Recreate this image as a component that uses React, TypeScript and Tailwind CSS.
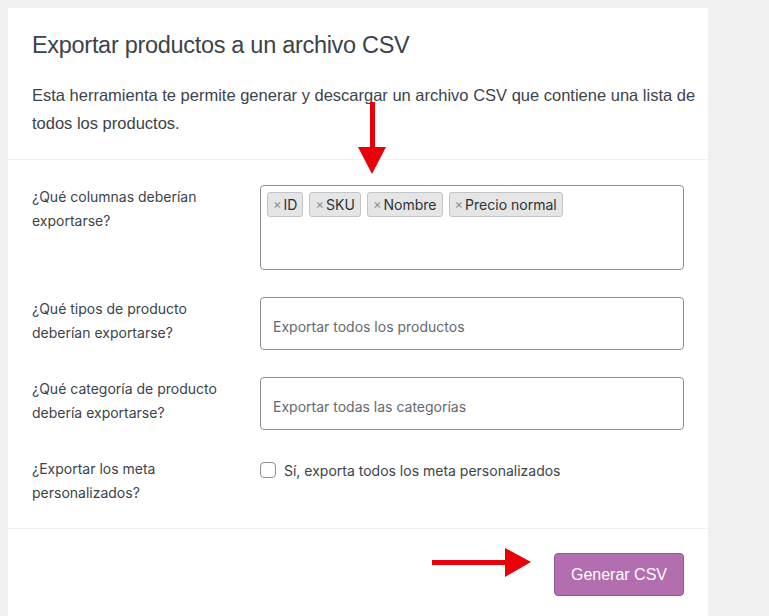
import React from "react";

const sans = "font-['Liberation_Sans',Arial,sans-serif]";
const inter = "font-['Inter','Noto_Sans',sans-serif]";

function Tag({ label }: { label: string }) {
  return (
    <span className="flex items-center h-[25px] px-[5px] rounded-[3px] border border-[#c3c4c7] bg-[#e5e5e5] text-[14px] text-[#2c3338]">
      <span className="text-[13px] text-[#8c8f94] mr-[2px] leading-none">×</span>
      {label}
    </span>
  );
}

function Row({ label, children }: { label: React.ReactNode; children: React.ReactNode }) {
  return (
    <div className="flex">
      <div className="w-[228px] shrink-0 text-[14px] leading-[24px] text-[#3c434a]">{label}</div>
      <div className="flex-1">{children}</div>
    </div>
  );
}

function DownArrow() {
  return (
    <svg className="absolute left-[357px] top-[102px]" width="30" height="74" viewBox="0 0 30 74">
      <rect x="13" y="0" width="5" height="47" fill="#e8000b" />
      <polygon points="1,45 29,45 15,72" fill="#e8000b" />
    </svg>
  );
}

function RightArrow() {
  return (
    <svg className="absolute left-[431px] top-[547px]" width="102" height="31" viewBox="0 0 102 31">
      <rect x="1" y="13" width="76" height="5" fill="#e8000b" />
      <polygon points="74,1 74,30 100,15" fill="#e8000b" />
    </svg>
  );
}

export default function App() {
  return (
    <div className={`min-h-screen bg-[#f0f0f1] pt-[8px] pl-[8px] relative overflow-hidden ${inter}`}>
      <div className="w-[700px] min-h-[620px] bg-white">
        <div className={`pl-[24px] pr-[4px] pt-[23px] pb-[22px] border-b border-[#f0f0f1] ${sans}`}>
          <h1 className="text-[23.5px] leading-[28px] text-[#3c434a] tracking-[-0.3px]">
            Exportar productos a un archivo CSV
          </h1>
          <p className="mt-[22px] text-[16.5px] leading-[28px] text-[#3c434a]">
            Esta herramienta te permite generar y descargar un archivo CSV que contiene una lista de todos los productos.
          </p>
        </div>

        <div className="px-[24px] pt-[25px] pb-[23px] flex flex-col gap-[27px] border-b border-[#f0f0f1]">
          <Row label={<>¿Qué columnas deberían<br />exportarse?</>}>
            <div className="w-[424px] h-[85px] border border-[#8c8f94] rounded-[4px] p-[6px] flex flex-wrap content-start gap-[6px]">
              <Tag label="ID" />
              <Tag label="SKU" />
              <Tag label="Nombre" />
              <Tag label="Precio normal" />
            </div>
          </Row>
          <Row label={<>¿Qué tipos de producto<br />deberían exportarse?</>}>
            <div className="w-[424px] h-[53px] border border-[#8c8f94] rounded-[4px] px-[12px] pt-[5px] flex items-center text-[14px] text-[#646970]">
              Exportar todos los productos
            </div>
          </Row>
          <Row label={<>¿Qué categoría de producto<br />debería exportarse?</>}>
            <div className="w-[424px] h-[53px] border border-[#8c8f94] rounded-[4px] px-[12px] pt-[5px] flex items-center text-[14px] text-[#646970]">
              Exportar todas las categorías
            </div>
          </Row>
          <Row label={<>¿Exportar los meta<br />personalizados?</>}>
            <label className="flex items-center h-[24px] mt-[1px] text-[14px] text-[#3c434a]">
              <span className="w-[16px] h-[16px] border border-[#8c8f94] rounded-[4px] bg-white mr-[8px]" />
              Sí, exporta todos los meta personalizados
            </label>
          </Row>
        </div>

        <div className="flex justify-end pr-[24px] pt-[24px]">
          <button className={`w-[130px] h-[43px] rounded-[4px] bg-[#b26eae] border border-[#9a5596] text-white text-[16px] ${sans}`}>
            Generar CSV
          </button>
        </div>
      </div>
      <DownArrow />
      <RightArrow />
    </div>
  );
}
